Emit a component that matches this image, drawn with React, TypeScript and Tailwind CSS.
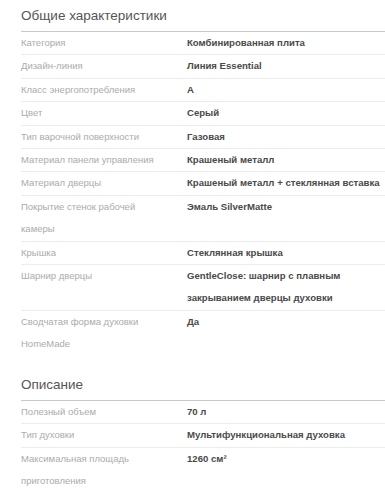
type Spec = { label: string; value: string };

const general: Spec[] = [
  { label: "Категория", value: "Комбинированная плита" },
  { label: "Дизайн-линия", value: "Линия Essential" },
  { label: "Класс энергопотребления", value: "A" },
  { label: "Цвет", value: "Серый" },
  { label: "Тип варочной поверхности", value: "Газовая" },
  { label: "Материал панели управления", value: "Крашеный металл" },
  { label: "Материал дверцы", value: "Крашеный металл + стеклянная вставка" },
  { label: "Покрытие стенок рабочей камеры", value: "Эмаль SilverMatte" },
  { label: "Крышка", value: "Стеклянная крышка" },
  {
    label: "Шарнир дверцы",
    value: "GentleClose: шарнир с плавным закрыванием дверцы духовки",
  },
  { label: "Сводчатая форма духовки HomeMade", value: "Да" },
];

const description: Spec[] = [
  { label: "Полезный объем", value: "70 л" },
  { label: "Тип духовки", value: "Мультифункциональная духовка" },
  { label: "Максимальная площадь приготовления", value: "1260 см²" },
];

const SpecRow = ({ label, value }: Spec) => (
  <div className="flex border-t border-[#ececec] first:border-t-0 leading-[22.4px]">
    <div className="w-[166px] shrink-0 pr-[24px] text-[9.5px] text-[#ababab]">
      {label}
    </div>
    <div className="w-[200px] shrink-0 text-[9.6px] font-bold text-[#4a4a4a]">
      {value}
    </div>
  </div>
);

const SpecSection = ({ title, items }: { title: string; items: Spec[] }) => (
  <section>
    <h2 className="text-[13.5px] leading-[20px] pt-[6px] pb-[5px] text-[#555] border-b border-[#c8c8c8]">
      {title}
    </h2>
    <div>
      {items.map((item) => (
        <SpecRow key={item.label} label={item.label} value={item.value} />
      ))}
    </div>
  </section>
);

export default function App() {
  return (
    <div
      className="w-[385px] h-[500px] overflow-hidden bg-white pl-[21px]"
      style={{ fontFamily: '"Liberation Sans", Arial, sans-serif' }}
    >
      <div className="w-[364px] flex flex-col gap-[13px]">
        <SpecSection title="Общие характеристики" items={general} />
        <SpecSection title="Описание" items={description} />
      </div>
    </div>
  );
}
